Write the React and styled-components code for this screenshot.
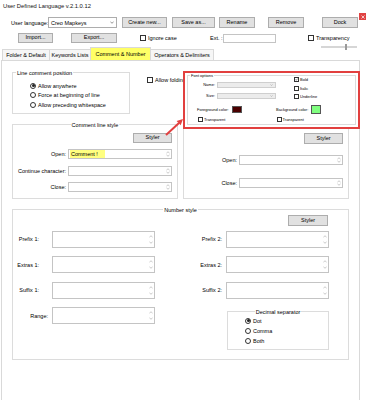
import React from 'react'
import styled, { createGlobalStyle } from 'styled-components'

const GlobalStyle = createGlobalStyle`
  html, body {
    margin: 0;
    padding: 0;
    background: #ffffff;
  }
  body {
    font-family: "Liberation Sans", Arial, sans-serif;
    font-size: 5.5px;
    color: #000;
  }
`

const Window = styled.div`
  width: 370px;
  height: 400px;
  position: relative;
  overflow: hidden;
  background: #ffffff;
`

const TitleBar = styled.div`
  height: 13px;
  line-height: 13px;
  padding-left: 3px;
  font-size: 5.8px;
  color: #111;
`

const ToolRow = styled.div`
  display: flex;
  align-items: ${(p) => p.$align || 'center'};
  height: ${(p) => p.$h}px;
  margin-top: ${(p) => p.$mt}px;
  padding-left: ${(p) => p.$pl}px;
`

const Text = styled.span`
  display: inline-block;
  white-space: nowrap;
  width: ${(p) => (p.$w ? p.$w + 'px' : 'auto')};
  margin-left: ${(p) => p.$ml || 0}px;
  text-align: ${(p) => (p.$right ? 'right' : 'left')};
`

const Button = styled.button`
  box-sizing: border-box;
  width: ${(p) => p.$w}px;
  height: ${(p) => p.$h || 11}px;
  margin-left: ${(p) => p.$ml || 0}px;
  padding: 0;
  background: #e1e1e1;
  border: 1px solid #adadad;
  font-family: inherit;
  font-size: 5.5px;
  color: #000;
  display: flex;
  align-items: center;
  justify-content: center;
  line-height: 1;
`

const Combo = styled.div`
  box-sizing: border-box;
  width: ${(p) => p.$w}px;
  height: ${(p) => p.$h}px;
  margin-left: ${(p) => p.$ml || 0}px;
  border: 1px solid ${(p) => (p.$disabled ? '#cfcfcf' : '#adadad')};
  background: ${(p) => (p.$disabled ? '#ececec' : '#ffffff')};
  display: flex;
  align-items: center;
  justify-content: space-between;
  padding: 0 2px;
`

const CloseBox = styled.div`
  align-self: flex-start;
  margin-top: -4px;
  margin-left: 1px;
  width: 7px;
  height: 7px;
  background: #e04343;
  display: flex;
  align-items: center;
  justify-content: center;
`

const CheckItem = styled.div`
  display: flex;
  align-items: center;
  gap: ${(p) => p.$gap ?? 2}px;
  width: ${(p) => (p.$w ? p.$w + 'px' : 'auto')};
  height: ${(p) => p.$h || 7}px;
  margin-left: ${(p) => p.$ml || 0}px;
  margin-top: ${(p) => p.$mt || 0}px;
  padding-left: ${(p) => p.$pl || 0}px;
  font-size: ${(p) => p.$fs || 5.5}px;
  white-space: nowrap;
`

const Box = styled.span`
  box-sizing: border-box;
  flex: none;
  width: ${(p) => p.$s || 6}px;
  height: ${(p) => p.$s || 6}px;
  border: 1px solid #333;
  background: #fff;
  display: flex;
  align-items: center;
  justify-content: center;
`

const RadioDot = styled.span`
  box-sizing: border-box;
  flex: none;
  width: 6px;
  height: 6px;
  border: 1px solid #333;
  border-radius: 50%;
  background: #fff;
  display: flex;
  align-items: center;
  justify-content: center;

  &::after {
    content: '';
    width: 3px;
    height: 3px;
    border-radius: 50%;
    background: ${(p) => (p.$on ? '#222' : 'transparent')};
  }
`

const Field = styled.div`
  box-sizing: border-box;
  width: ${(p) => (p.$w ? p.$w + 'px' : '100%')};
  height: ${(p) => (p.$h ? p.$h + 'px' : '100%')};
  margin-left: ${(p) => p.$ml || 0}px;
  margin-top: ${(p) => p.$mt || 0}px;
  border: 1px solid #c4c4c4;
  background: #fff;
  display: flex;
  align-items: center;
  justify-content: space-between;
  padding-left: 1px;
`

const Highlight = styled.span`
  background: #ffff80;
  padding: 1px 7px 1px 1px;
`

const SpinCol = styled.div`
  align-self: stretch;
  width: 6px;
  display: flex;
  flex-direction: column;
  align-items: center;
  justify-content: space-evenly;
`

const Slider = styled.div`
  position: relative;
  width: 36px;
  height: 2px;
  margin-top: 5px;
  margin-left: 13px;
  background: #d6d6d6;
`

const SliderThumb = styled.span`
  position: absolute;
  left: 24px;
  top: -2px;
  width: 2px;
  height: 6px;
  background: #9a9a9a;
`

const Column = styled.div`
  display: flex;
  flex-direction: column;
  margin-left: ${(p) => p.$ml || 0}px;
  margin-top: ${(p) => p.$mt || 0}px;
`

const TabStrip = styled.div`
  display: flex;
  align-items: flex-end;
  height: 11px;
  margin-top: 2px;
  padding-left: 3px;
`

const Tab = styled.div`
  box-sizing: border-box;
  width: ${(p) => p.$w}px;
  height: ${(p) => (p.$active ? 13 : 11)}px;
  border: 1px solid #d9d9d9;
  border-bottom: none;
  margin-left: -1px;
  background: ${(p) => (p.$active ? '#ffff66' : '#f6f6f6')};
  display: flex;
  align-items: center;
  justify-content: center;
  white-space: nowrap;
  position: relative;
  z-index: ${(p) => (p.$active ? 1 : 0)};
`

const Panel = styled.div`
  box-sizing: border-box;
  width: 359px;
  height: 340px;
  margin-left: 1px;
  border: 1px solid #d9d9d9;
  border-bottom: none;
  background: #fff;
`

const TopSection = styled.div`
  display: flex;
  align-items: flex-start;
  padding-left: 10px;
  padding-top: 11px;
`

const Group = styled.div`
  box-sizing: border-box;
  flex: none;
  width: ${(p) => p.$w}px;
  height: ${(p) => p.$h}px;
  margin-top: ${(p) => p.$mt || 0}px;
  margin-left: ${(p) => p.$ml || 0}px;
  border: 1px solid #dcdcdc;
`

const GroupTitle = styled.div`
  height: ${(p) => p.$lh || 8}px;
  line-height: ${(p) => p.$lh || 8}px;
  margin-top: ${(p) => -(p.$lh || 8) / 2 - 0.5}px;
  display: flex;
  justify-content: ${(p) => (p.$center ? 'center' : 'flex-start')};
  padding-left: ${(p) => p.$pl || 0}px;
  font-size: ${(p) => p.$fs || 5.5}px;

  span {
    background: #fff;
    padding: 0 1px;
    white-space: nowrap;
  }
`

const RadioRow = styled.div`
  display: flex;
  align-items: center;
  gap: 2px;
  height: ${(p) => p.$h || 9.5}px;
  margin-top: ${(p) => p.$mt || 0}px;
  padding-left: ${(p) => p.$pl}px;
  white-space: nowrap;
`

const CommentRow = styled.div`
  display: flex;
  gap: 5px;
  padding-left: 10px;
  margin-top: 10px;
`

const StylerRow = styled.div`
  display: flex;
  justify-content: flex-end;
  padding-right: ${(p) => p.$pr}px;
  margin-top: ${(p) => p.$mt}px;
`

const FieldRow = styled.div`
  display: flex;
  align-items: center;
  height: 10px;
  margin-top: ${(p) => p.$mt}px;
`

const NumberGrid = styled.div`
  display: grid;
  grid-template-columns: 39px 103px 71px 103px;
  grid-template-rows: repeat(4, 17px);
  row-gap: 8.5px;
  margin-top: 4.5px;
`

const NumLabel = styled.div`
  display: flex;
  align-items: center;
  justify-content: flex-end;
  padding-right: ${(p) => p.$pr}px;
  white-space: nowrap;
  grid-column: ${(p) => p.$col};
`

const DecimalGroup = styled(Group)`
  grid-column: 4;
  grid-row: 4;
  align-self: start;
`

const Annotation = styled.div`
  position: absolute;
  left: 183px;
  top: 71px;
  width: 177px;
  height: 58px;
  box-sizing: border-box;
  border: 2px solid #e2403f;
  background: #fff;
  padding: 2px;
`

const FontTop = styled.div`
  display: flex;
  align-items: flex-start;
`

const SmallRow = styled.div`
  display: flex;
  align-items: center;
  height: ${(p) => p.$h}px;
  margin-top: ${(p) => p.$mt}px;
  padding-left: ${(p) => p.$pl || 0}px;
  font-size: 4px;
  white-space: nowrap;
`

const Swatch = styled.span`
  box-sizing: border-box;
  width: 10px;
  height: ${(p) => p.$h}px;
  margin-left: 2px;
  border: 1px solid #555;
  background: ${(p) => p.$color};
`

const ColorItem = styled.div`
  display: flex;
  align-items: center;
  width: ${(p) => p.$w}px;
`

const ArrowSvg = styled.svg`
  position: absolute;
  left: 160px;
  top: 115px;
`

const Chevron = ({ down = true, color = '#555', w = 4, h = 3 }) => (
  <svg width={w} height={h} viewBox="0 0 4 3">
    <path d={down ? 'M0.4 0.6 L2 2.3 L3.6 0.6' : 'M0.4 2.4 L2 0.7 L3.6 2.4'} fill="none" stroke={color} strokeWidth="0.6" />
  </svg>
)

const Spinner = () => (
  <SpinCol>
    <Chevron down={false} color="#a8a8a8" w={4} h={3} />
    <Chevron color="#a8a8a8" w={4} h={3} />
  </SpinCol>
)

const Check = ({ size = 6, checked }) => (
  <Box $s={size}>
    {checked && (
      <svg width={size - 2} height={size - 2} viewBox="0 0 4 4">
        <path d="M0.5 2 L1.6 3.1 L3.5 0.8" fill="none" stroke="#222" strokeWidth="0.7" />
      </svg>
    )}
  </Box>
)

const TextField = ({ w, h, mt, ml, children, spin = true }) => (
  <Field $w={w} $h={h} $mt={mt} $ml={ml}>
    <span>{children}</span>
    {spin && <Spinner />}
  </Field>
)

const CommentFields = ({ rows }) =>
  rows.map((r) => (
    <FieldRow key={r.label} $mt={r.mt}>
      <Text $w={53} $right>{r.label}</Text>
      <TextField w={104} h={10} ml={2}>{r.value}</TextField>
    </FieldRow>
  ))

const App = () => {
  return (
    <Window>
      <GlobalStyle />
      <TitleBar>User Defined Language v.2.1.0.12</TitleBar>

      <ToolRow $h={11} $mt={4} $pl={11}>
        <Text $w={37}>User language:</Text>
        <Combo $w={69} $h={11}>
          <span>Creo Mapkeys</span>
          <Chevron />
        </Combo>
        <Button $w={45} $ml={5}>Create new...</Button>
        <Button $w={43} $ml={5}>Save as...</Button>
        <Button $w={36} $ml={4}>Rename</Button>
        <Button $w={36} $ml={13}>Remove</Button>
        <Button $w={36} $ml={18}>Dock</Button>
        <CloseBox>
          <svg width="4" height="4" viewBox="0 0 4 4">
            <path d="M0.5 0.5 L3.5 3.5 M3.5 0.5 L0.5 3.5" stroke="#fff" strokeWidth="0.7" />
          </svg>
        </CloseBox>
      </ToolRow>

      <ToolRow $h={14} $mt={5} $pl={18} $align="flex-start">
        <Button $w={35} $h={10}>Import...</Button>
        <Button $w={46} $h={10} $ml={18}>Export...</Button>
        <CheckItem $w={37} $ml={23} $mt={2} $h={6}>
          <Check />
          <span>Ignore case</span>
        </CheckItem>
        <Text $w={13} $ml={33} style={{ lineHeight: '10px' }}>Ext. :</Text>
        <TextField w={53} h={9} mt={1} spin={false} />
        <Column $ml={32} $mt={2}>
          <CheckItem $h={6}>
            <Check />
            <span>Transparency</span>
          </CheckItem>
          <Slider>
            <SliderThumb />
          </Slider>
        </Column>
      </ToolRow>

      <TabStrip>
        <Tab $w={48}>Folder &amp; Default</Tab>
        <Tab $w={42}>Keywords Lists</Tab>
        <Tab $w={61} $active>Comment &amp; Number</Tab>
        <Tab $w={64}>Operators &amp; Delimiters</Tab>
      </TabStrip>

      <Panel>
        <TopSection>
          <Group $w={118} $h={42}>
            <GroupTitle $pl={3}><span>Line comment position</span></GroupTitle>
            <RadioRow $pl={17} $mt={4.5}><RadioDot $on />Allow anywhere</RadioRow>
            <RadioRow $pl={17}><RadioDot />Force at beginning of line</RadioRow>
            <RadioRow $pl={17}><RadioDot />Allow preceding whitespace</RadioRow>
          </Group>
          <CheckItem $ml={17} $mt={4}>
            <Check />
            <span>Allow folding of comments</span>
          </CheckItem>
        </TopSection>

        <CommentRow>
          <Group $w={166} $h={75}>
            <GroupTitle $center><span>Comment line style</span></GroupTitle>
            <StylerRow $pr={5} $mt={4.5}>
              <Button $w={39} $h={10}>Styler</Button>
            </StylerRow>
            <CommentFields
              rows={[
                { label: 'Open:', mt: 6, value: <Highlight>Comment !</Highlight> },
                { label: 'Continue character:', mt: 7 },
                { label: 'Close:', mt: 6 },
              ]}
            />
          </Group>
          <Group $w={166} $h={75}>
            <GroupTitle $center><span>Comment style</span></GroupTitle>
            <StylerRow $pr={5} $mt={4.5}>
              <Button $w={39} $h={11}>Styler</Button>
            </StylerRow>
            <CommentFields
              rows={[
                { label: 'Open:', mt: 11 },
                { label: 'Close:', mt: 13 },
              ]}
            />
          </Group>
        </CommentRow>

        <Group $w={337} $h={151} $mt={10} $ml={10}>
          <GroupTitle $center><span>Number style</span></GroupTitle>
          <StylerRow $pr={20} $mt={1.5}>
            <Button $w={40} $h={11}>Styler</Button>
          </StylerRow>
          <NumberGrid>
            <NumLabel $pr={13} $col={1}>Prefix 1:</NumLabel>
            <TextField />
            <NumLabel $pr={4} $col={3}>Prefix 2:</NumLabel>
            <TextField />

            <NumLabel $pr={13} $col={1}>Extras 1:</NumLabel>
            <TextField />
            <NumLabel $pr={4} $col={3}>Extras 2:</NumLabel>
            <TextField />

            <NumLabel $pr={13} $col={1}>Suffix 1:</NumLabel>
            <TextField />
            <NumLabel $pr={4} $col={3}>Suffix 2:</NumLabel>
            <TextField />

            <NumLabel $pr={4} $col={1}>Range:</NumLabel>
            <TextField />

            <DecimalGroup $w={102} $h={39} $mt={4} $ml={1}>
              <GroupTitle $center><span>Decimal separator</span></GroupTitle>
              <RadioRow $pl={17} $h={10}><RadioDot $on />Dot</RadioRow>
              <RadioRow $pl={17} $h={10}><RadioDot />Comma</RadioRow>
              <RadioRow $pl={17} $h={10}><RadioDot />Both</RadioRow>
            </DecimalGroup>
          </NumberGrid>
        </Group>
      </Panel>

      <Annotation>
        <Group $w={169} $h={50}>
          <GroupTitle $lh={4} $fs={4} $pl={2}><span>Font options</span></GroupTitle>
          <FontTop>
            <Column>
              <SmallRow $h={6} $mt={4}>
                <Text $w={27} $right>Name:</Text>
                <Combo $w={59} $h={6} $ml={2} $disabled>
                  <span />
                  <Chevron color="#888" w={3} h={2} />
                </Combo>
              </SmallRow>
              <SmallRow $h={6} $mt={5}>
                <Text $w={27} $right>Size:</Text>
                <Combo $w={59} $h={6} $ml={2} $disabled>
                  <span />
                  <Chevron color="#888" w={3} h={2} />
                </Combo>
              </SmallRow>
            </Column>
            <Column $ml={18}>
              <CheckItem $h={5} $mt={-1} $fs={4} $gap={1}><Check size={5} checked />Bold</CheckItem>
              <CheckItem $h={5} $mt={4} $fs={4} $gap={1}><Check size={5} />Italic</CheckItem>
              <CheckItem $h={5} $mt={3} $fs={4} $gap={1}><Check size={5} />Underline</CheckItem>
            </Column>
          </FontTop>
          <SmallRow $h={9} $mt={6} $pl={9}>
            <ColorItem $w={79}>
              <Text $w={33}>Foreground color:</Text>
              <Swatch $h={7} $color="#4a0000" />
            </ColorItem>
            <ColorItem $w={79}>
              <Text $w={33}>Background color:</Text>
              <Swatch $h={9} $color="#80ff80" />
            </ColorItem>
          </SmallRow>
          <SmallRow $h={5} $mt={3} $pl={10}>
            <CheckItem $w={80} $h={5} $fs={4} $gap={1}><Check size={5} />Transparent</CheckItem>
            <CheckItem $w={80} $h={5} $fs={4} $gap={1}><Check size={5} />Transparent</CheckItem>
          </SmallRow>
        </Group>
      </Annotation>

      <ArrowSvg width="26" height="26" viewBox="0 0 26 26">
        <line x1="6" y1="20" x2="19" y2="8" stroke="#e2403f" strokeWidth="2" />
        <polygon points="23,4 20.7,10.3 16.6,5.9" fill="#e2403f" />
      </ArrowSvg>
    </Window>
  )
}

export default App
